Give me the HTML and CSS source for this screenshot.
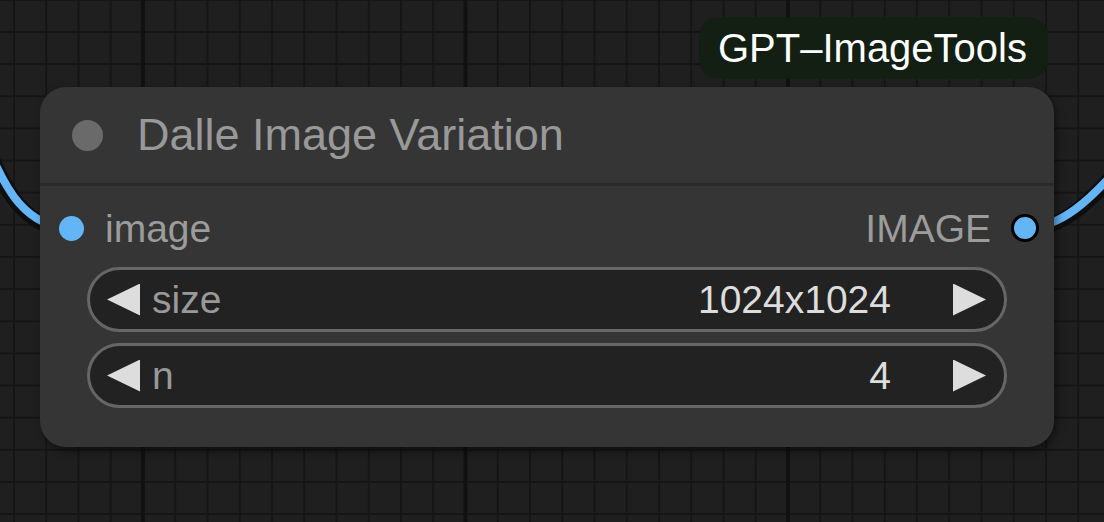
FILE: index.html
```html
<!DOCTYPE html>
<html>
<head>
<meta charset="utf-8">
<link rel="stylesheet" href="styles.css">
</head>
<body>
<svg class="links" width="1104" height="522" viewBox="0 0 1104 522">
  <path class="link-shadow" d="M -10 152 C 5 187, 25 228, 72 228"/>
  <path class="link-line" d="M -10 152 C 5 187, 25 228, 72 228"/>
  <path class="link-shadow" d="M 1025 228 C 1060 228, 1090 202, 1130 154"/>
  <path class="link-line" d="M 1025 228 C 1060 228, 1090 202, 1130 154"/>
</svg>
<div class="stage">
  <div class="badge">GPT–ImageTools</div>
  <div class="node">
    <div class="title">
      <span class="title-dot"></span>
      <span class="title-text">Dalle Image Variation</span>
    </div>
    <div class="slots">
      <div class="slot slot-in"><span class="dot"></span><span class="slot-label">image</span></div>
      <div class="slot slot-out"><span class="slot-label">IMAGE</span><span class="dot dot-out"></span></div>
    </div>
    <div class="widgets">
      <div class="widget">
        <span class="arrow arrow-left"></span>
        <span class="w-label">size</span>
        <span class="w-value">1024x1024</span>
        <span class="arrow arrow-right"></span>
      </div>
      <div class="widget">
        <span class="arrow arrow-left"></span>
        <span class="w-label">n</span>
        <span class="w-value">4</span>
        <span class="arrow arrow-right"></span>
      </div>
    </div>
  </div>
</div>
</body>
</html>
```
FILE: styles.css
```css
* { box-sizing: border-box; }
html, body {
  margin: 0;
  padding: 0;
  width: 1104px;
  height: 522px;
  overflow: hidden;
}
body {
  font-family: "Liberation Sans", Arial, sans-serif;
  background-color: #1f1f1f;
  background-image:
    linear-gradient(90deg, #111111 0 4px, transparent 4px),
    linear-gradient(90deg, #151515 0 2px, transparent 2px),
    linear-gradient(180deg, #151515 0 2px, transparent 2px);
  background-size: 322.5px 100%, 32.25px 100%, 100% 32.15px;
  background-position: 141px 0, 13px 0, 0 31px;
  position: relative;
}
.links {
  position: absolute;
  left: 0;
  top: 0;
  z-index: 0;
}
.link-shadow {
  fill: none;
  stroke: #0e0e0e;
  stroke-width: 15;
  transform: translate(0, 2px);
}
.link-line {
  fill: none;
  stroke: #64b5f6;
  stroke-width: 8;
}
.stage {
  position: relative;
  z-index: 1;
  width: 1014px;
  margin-left: 40px;
  padding-top: 17px;
  display: flex;
  flex-direction: column;
}
.badge {
  align-self: flex-end;
  margin-right: 6px;
  height: 62px;
  padding: 0 21px 0 19px;
  border-radius: 20px;
  background: #121f12;
  color: #ffffff;
  font-size: 40px;
  line-height: 62px;
  white-space: nowrap;
}
.node {
  margin-top: 8px;
  height: 360px;
  background: #353535;
  border-radius: 26px;
  box-shadow: 3px 4px 8px rgba(0, 0, 0, 0.45);
  display: flex;
  flex-direction: column;
}
.title {
  height: 99px;
  border-bottom: 3px solid #2b2b2b;
  display: flex;
  align-items: center;
  padding-left: 32px;
  gap: 34px;
}
.title-dot {
  width: 31px;
  height: 31px;
  border-radius: 50%;
  background: #6a6a6a;
  flex: none;
}
.title-text {
  font-size: 45px;
  line-height: 45px;
  color: #999999;
  margin-top: -2px;
}
.slots {
  margin-top: 12px;
  height: 60px;
  display: flex;
  align-items: center;
  justify-content: space-between;
  padding: 0 15px 0 19px;
}
.slot {
  display: flex;
  align-items: center;
}
.slot-in { gap: 21px; }
.slot-out { gap: 20px; }
.slot-label {
  font-size: 39px;
  line-height: 39px;
  color: #9c9c9c;
}
.dot {
  width: 25px;
  height: 25px;
  border-radius: 50%;
  background: #64b5f6;
  flex: none;
}
.dot-out {
  width: 28px;
  height: 28px;
  border: 3px solid #000;
}
.widgets {
  margin-top: 9px;
  padding: 0 47px;
  display: flex;
  flex-direction: column;
  gap: 11px;
}
.widget {
  height: 65px;
  border: 3px solid #666666;
  border-radius: 33px;
  background: #222222;
  display: flex;
  align-items: center;
  padding: 0 18px 0 17px;
  font-size: 39px;
  line-height: 39px;
}
.arrow {
  width: 33px;
  height: 32px;
  background: #dddddd;
  flex: none;
}
.arrow-left {
  clip-path: polygon(0 50%, 100% 0, 100% 100%);
}
.arrow-right {
  clip-path: polygon(0 0, 100% 50%, 0 100%);
  margin-left: 62px;
}
.w-label {
  margin-left: 12px;
  color: #999999;
}
.w-value {
  margin-left: auto;
  color: #dddddd;
}
```
